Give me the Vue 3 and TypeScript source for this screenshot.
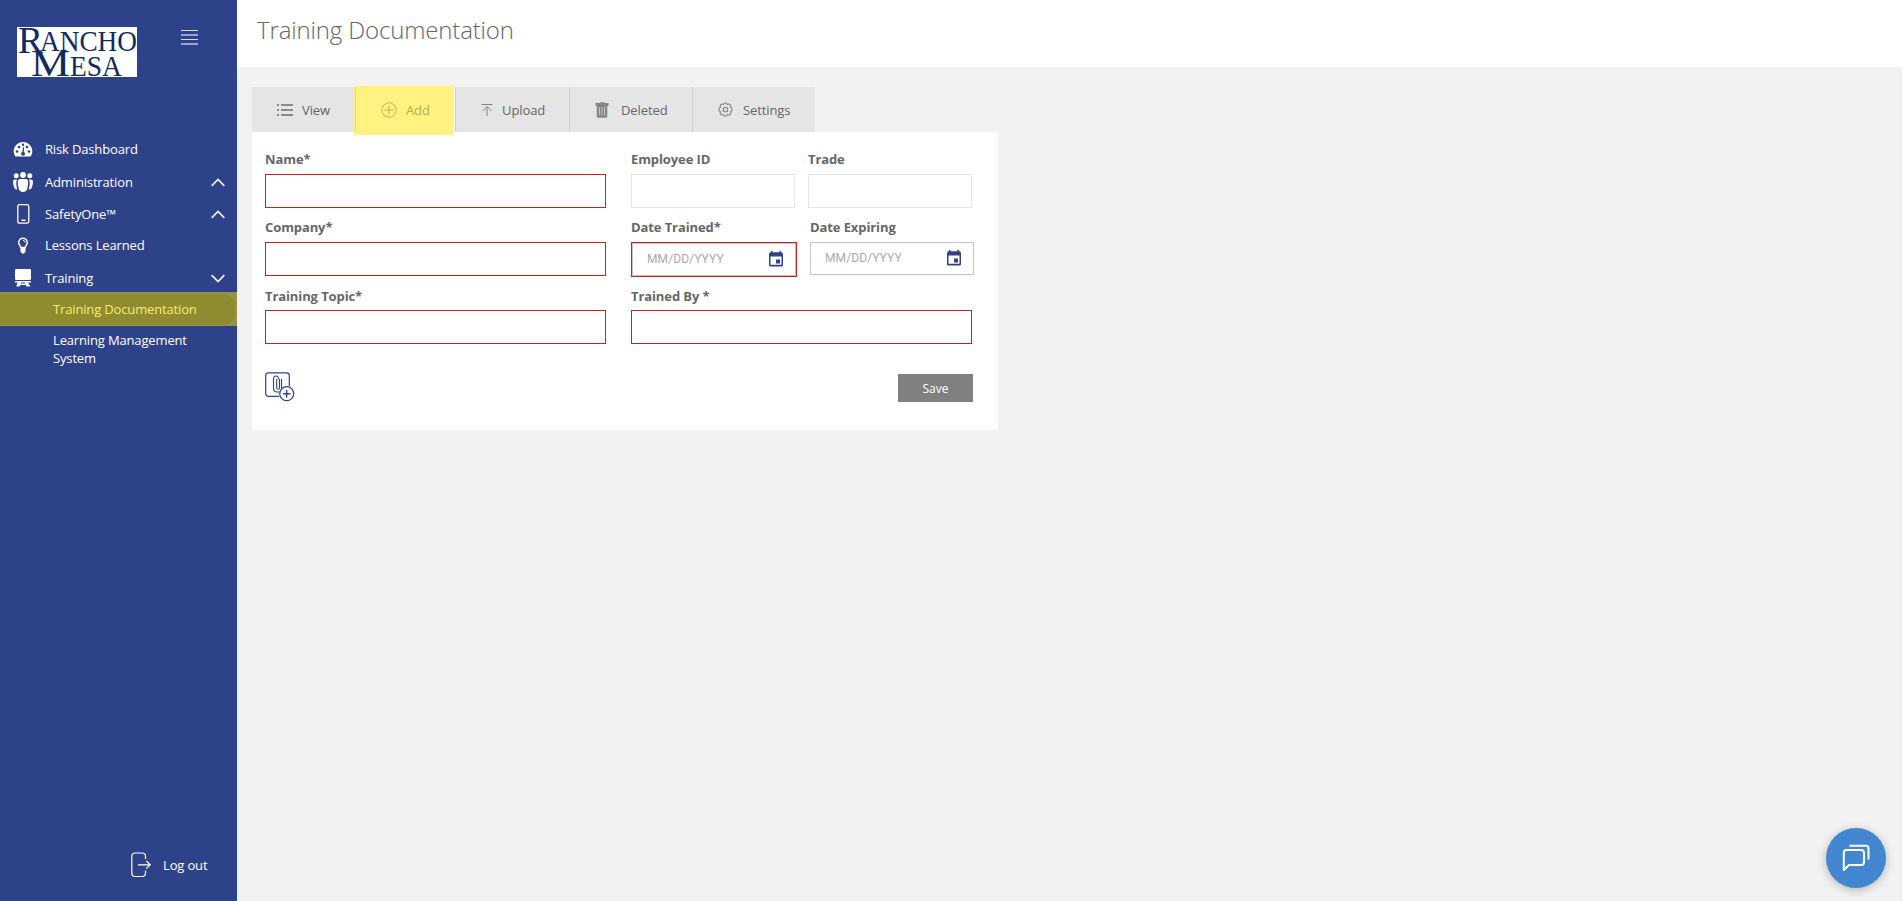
<script setup lang="ts">
import { ref } from 'vue'

interface MenuItem {
  label: string
  icon: string
  height: number
  arrow?: 'up' | 'down'
}

const menu: MenuItem[] = [
  { label: 'Risk Dashboard', icon: 'gauge', height: 34 },
  { label: 'Administration', icon: 'people', height: 32, arrow: 'up' },
  { label: 'SafetyOne™', icon: 'phone', height: 32, arrow: 'up' },
  { label: 'Lessons Learned', icon: 'bulb', height: 30 },
  { label: 'Training', icon: 'board', height: 32, arrow: 'down' },
]

const tabs = [
  { label: 'View', icon: 'list', cls: 'view' },
  { label: 'Add', icon: 'plus', cls: 'add' },
  { label: 'Upload', icon: 'upload', cls: 'upload' },
  { label: 'Deleted', icon: 'trash', cls: 'deleted' },
  { label: 'Settings', icon: 'gear', cls: 'settings' },
]

const name = ref('')
const employeeId = ref('')
const trade = ref('')
const company = ref('')
const dateTrained = ref('')
const dateExpiring = ref('')
const topic = ref('')
const trainedBy = ref('')
</script>

<template>
  <div class="page">
    <aside class="sidebar">
      <div class="brand">
        <svg class="logo" viewBox="0 0 120 50" width="120" height="50">
          <rect width="120" height="50" fill="#fff" />
          <g fill="#0f2b5f" font-family="'Liberation Serif', serif">
            <text x="1" y="26" font-size="38" textLength="25" lengthAdjust="spacingAndGlyphs">R</text>
            <text x="23" y="23.500" font-size="30" textLength="97" lengthAdjust="spacingAndGlyphs">ANCHO</text>
            <text x="14" y="49" font-size="37" textLength="39" lengthAdjust="spacingAndGlyphs">M</text>
            <text x="53" y="49" font-size="29" textLength="52" lengthAdjust="spacingAndGlyphs">ESA</text>
          </g>
        </svg>
        <svg class="burger" viewBox="0 0 17 15" width="17" height="15">
          <rect width="17" height="1" fill="#d9dcea" />
          <rect y="4" width="17" height="2" fill="#9aa3cd" />
          <rect y="9" width="17" height="1" fill="#d9dcea" />
          <rect y="13" width="17" height="2" fill="#9aa3cd" />
        </svg>
      </div>

      <nav class="menu">
        <a v-for="item in menu" :key="item.label" class="item" :class="item.icon" :style="{ height: item.height + 'px' }">
          <span class="item-icon">
            <svg v-if="item.icon === 'gauge'" width="20" height="16" viewBox="0 0 20 16">
              <path d="M2.300 15.500A9.300 9.300 0 1 1 17.700 15.500Z" fill="#fff" />
              <g fill="#2e4289">
                <circle cx="4" cy="10.500" r="1.300" /><circle cx="6" cy="6" r="1.300" /><circle cx="10" cy="3.700" r="1.200" />
                <circle cx="14" cy="6" r="1.300" /><circle cx="16" cy="10.500" r="1.300" />
                <path d="M10.200 6l.9.2-.3 4.700a2 2 0 1 1-1.500 0z" />
              </g>
            </svg>
            <svg v-else-if="item.icon === 'people'" width="20" height="20" viewBox="0 0 20 20" fill="#fff">
              <circle cx="3.200" cy="3.800" r="2.500" /><circle cx="16.800" cy="3.800" r="2.500" /><circle cx="10" cy="3" r="2.900" />
              <path d="M0 9.500q0-2 2-2h2Q3.200 9 3.400 12.500T4.500 17.500q-3 .3-3.500-2.500Q0 12 0 9.500zM20 9.500q0-2-2-2h-2q.8 1.500.6 5T15.500 17.500q3 .3 3.500-2.500 1-3 1-5.500z" />
              <path d="M4.800 9.500q0-2.500 2.500-2.500h5.400q2.500 0 2.500 2.500 0 4-1 7.500-1 3-4.200 3t-4.200-3q-1-3.500-1-7.500z" />
            </svg>
            <svg v-else-if="item.icon === 'phone'" width="13" height="20" viewBox="0 0 13 20" fill="none" stroke="#fff">
              <rect x=".8" y=".7" width="11" height="18.500" rx="1.800" stroke-width="1.300" /><path d="M4.500 16.300h4" stroke-width="1.500" />
            </svg>
            <svg v-else-if="item.icon === 'bulb'" width="12" height="17" viewBox="0 0 12 17">
              <path d="M6 1.200a4.300 4.300 0 0 0-4.300 4.300c0 2 1.700 3 2 5h4.600c.3-2 2-3 2-5A4.300 4.300 0 0 0 6 1.200z" fill="none" stroke="#fff" stroke-width="1.500" />
              <path d="M3.500 10.300h5v4l-1.400 2.200H4.900L3.500 14.300z" fill="#fff" />
              <path d="M6 3.300q2 .2 2.200 2.200" fill="none" stroke="#fff" />
            </svg>
            <svg v-else width="16" height="18" viewBox="0 0 16 18" fill="#fff">
              <rect width="16" height="11" rx="1.300" /><rect y="12" width="16" height="1.500" />
              <path d="M3 13h3l-.5 1.500h5L10 13h3l1.700 3.500H15V17.500h-3.500l-.7-1.500H5.200l-.7 1.500H1.500v-1z" />
            </svg>
          </span>
          <span class="item-label">{{ item.label }}</span>
          <svg v-if="item.arrow" class="chevron" width="14" height="9" viewBox="0 0 14 9" fill="none" stroke="#f1f3fa" stroke-width="1.700">
            <path :d="item.arrow === 'up' ? 'M.7 7.800L7 1.500l6.300 6.300' : 'M.7 1.200L7 7.500l6.300-6.300'" />
          </svg>
        </a>
        <a class="sub current"><span>Training Documentation</span></a>
        <a class="sub wrap">Learning Management System</a>
      </nav>

      <a class="logout">
        <svg width="21" height="26" viewBox="0 0 21 26" fill="none" stroke="#fff" stroke-width="1.200">
          <path d="M14.500 7V4.500Q14.500 1 11 1H4Q.8 1 .8 4.500v16Q.8 24.500 4 24.500h7q3.500 0 3.500-3.500v-2.500M7 12.800h12M15.300 9l3.900 3.800-3.900 3.800" />
        </svg>
        <span>Log out</span>
      </a>
    </aside>

    <main class="main">
      <header class="header"><h1>Training Documentation</h1></header>

      <div class="tabs">
        <button v-for="tab in tabs" :key="tab.label" class="tab" :class="tab.cls">
          <svg v-if="tab.icon === 'list'" width="16" height="12" viewBox="0 0 16 12" fill="#8a8a8a">
            <path d="M0 0h2v2H0zM4 0h12v2H4zM0 5h2v2H0zM4 5h12v2H4zM0 10h2v2H0zM4 10h12v2H4z" />
          </svg>
          <svg v-else-if="tab.icon === 'plus'" width="16" height="16" viewBox="0 0 16 16" fill="none" stroke="#c0b44c">
            <circle cx="8" cy="8" r="7.200" /><path d="M8 3.500v9M3.500 8h9" />
          </svg>
          <svg v-else-if="tab.icon === 'upload'" width="12" height="12" viewBox="0 0 12 12" fill="none" stroke="#858585">
            <path d="M.5.500h11M6 12V3M1.500 7L6 2.500 10.500 7" />
          </svg>
          <svg v-else-if="tab.icon === 'trash'" width="14" height="16" viewBox="0 0 14 16" fill="#858585">
            <path d="M4.500 1V.300h5V1H13.500v2.500L12.300 4v10q0 1.700-1.700 1.700H3.400Q1.700 15.700 1.700 14V4L.5 3.500V1z" />
            <path d="M4.500 5v8.500M7 5v8.500M9.500 5v8.500" stroke="#c9c9c9" stroke-width=".9" />
          </svg>
          <svg v-else width="15" height="15" viewBox="0 0 15 15" fill="none" stroke="#858585" stroke-width="1.100">
            <path d="M5.600 2.400Q6 .8 7.500.8t1.900 1.600q1.500-.8 2.700.1 1.300 1.200.4 2.700 1.800.6 1.700 2.300 0 1.700-1.700 2.300.9 1.500-.4 2.700-1.200.9-2.700.1-.4 1.600-1.900 1.600t-1.900-1.600q-1.500.8-2.700-.1-1.300-1.200-.4-2.700Q.8 9.200.8 7.500q0-1.700 1.700-2.300-.9-1.500.4-2.700 1.200-.9 2.700-.1z" />
            <circle cx="7.500" cy="7.500" r="2.300" />
          </svg>
          <span>{{ tab.label }}</span>
        </button>
      </div>

      <form class="card" @submit.prevent>
        <div class="row">
          <label class="field wide"><span>Name*</span><input v-model="name" class="required" /></label>
          <label class="field half"><span>Employee ID</span><input v-model="employeeId" /></label>
          <label class="field half"><span>Trade</span><input v-model="trade" /></label>
        </div>
        <div class="row">
          <label class="field wide"><span>Company*</span><input v-model="company" class="required" /></label>
          <label class="field date-req"><span>Date Trained*</span>
            <div class="ring"><div class="date">
              <input v-model="dateTrained" placeholder="MM/DD/YYYY" />
              <svg width="14" height="16" viewBox="0 0 14 16"><path d="M2 0h1.500v1.300h7V0H12v1.300q2 0 2 2V14q0 1.500-1.500 1.500h-11Q0 15.500 0 14V3.300q0-2 2-2zM1.500 5.500v8.300h11V5.500zM7 8.500h4v4H7z" fill="#2e4289" fill-rule="evenodd" /></svg>
            </div></div>
          </label>
          <label class="field half"><span>Date Expiring</span>
            <div class="date">
              <input v-model="dateExpiring" placeholder="MM/DD/YYYY" />
              <svg width="14" height="16" viewBox="0 0 14 16"><path d="M2 0h1.500v1.300h7V0H12v1.300q2 0 2 2V14q0 1.500-1.500 1.500h-11Q0 15.500 0 14V3.300q0-2 2-2zM1.500 5.500v8.300h11V5.500zM7 8.500h4v4H7z" fill="#2e4289" fill-rule="evenodd" /></svg>
            </div>
          </label>
        </div>
        <div class="row last">
          <label class="field wide"><span>Training Topic*</span><input v-model="topic" class="required" /></label>
          <label class="field wide"><span>Trained By *</span><input v-model="trainedBy" class="required" /></label>
        </div>
        <div class="actions">
          <svg width="30" height="30" viewBox="0 0 30 30" fill="none" stroke="#2e4289" stroke-width="1.200">
            <path d="M14 24.300H3.500Q.7 24.300.7 21.500V3.500Q.7.800 3.500.8h18q2.800 0 2.800 2.700V14" />
            <path d="M14.500 7v8.500q0 1.800-1.400 1.800t-1.400-1.800V7M8.500 16V7.500Q8.500 4 11 4t2.700 3.500M16.500 7v9M8.500 15.500q0 4.500 3.500 4.500h2" stroke-width="1.100" />
            <circle cx="21.700" cy="21.700" r="7" fill="#fff" /><path d="M21.700 18v7.500M18 21.700h7.500" stroke-width="1.400" />
          </svg>
          <button class="save">Save</button>
        </div>
      </form>
    </main>

    <button class="chat" aria-label="Chat">
      <svg width="28" height="28" viewBox="0 0 28 28" fill="none" stroke="#fff" stroke-width="2" stroke-linejoin="round">
        <path d="M4.500 6H19q3 0 3 3v9q0 3-3 3H7l-5.200 5V9q0-3 2.700-3z" /><path d="M7.500 1.800H24q2.500 0 2.500 2.500V15.500" />
      </svg>
    </button>
  </div>
</template>

<style>
html,
body {
  margin: 0;
  overflow: hidden;
}
</style>

<style scoped>
.page {
  display: flex;
  width: 100vw;
  height: 100vh;
  background: #f2f2f2;
  font-family: 'Open Sans', 'Noto Sans', sans-serif;
  font-size: 13px;
  letter-spacing: -0.15px;
  color: #666;
  box-sizing: border-box;
  border-right: 1px solid #fff;
}
.page * {
  box-sizing: border-box;
}
.sidebar {
  display: flex;
  flex-direction: column;
  width: 237px;
  height: 100%;
  background: #2e4289;
  color: #fff;
}
.brand {
  display: flex;
  align-items: flex-start;
  height: 132px;
  padding: 27px 0 0 17px;
}
.logo {
  overflow: visible;
  letter-spacing: 0;
}
.burger {
  margin: 3px 0 0 44px;
}
.item {
  display: flex;
  align-items: center;
  padding-right: 12px;
}
.board {
  padding-top: 4px;
}
.item-icon {
  display: flex;
  justify-content: center;
  width: 46px;
  margin-right: -1px;
}
.item-label {
  flex: 1;
}
.sub {
  display: flex;
  align-items: center;
}
.current {
  height: 34px;
  padding: 2px 2px 1px 0;
  background: #979545;
  color: #f5ed6b;
}
.current span {
  flex: 1;
  height: 31px;
  padding-left: 53px;
  border-radius: 0 12px 12px 0;
  background: #8f8b30;
  line-height: 31px;
}
.wrap {
  width: 210px;
  padding: 5px 0 0 53px;
  line-height: 18px;
}
.logout {
  display: flex;
  align-items: center;
  gap: 11px;
  margin: auto 0 23px 131px;
}
.main {
  flex: 1;
}
.header {
  height: 67px;
  padding: 13px 0 0 20px;
  background: #fff;
}
h1 {
  margin: 0;
  font-size: 24px;
  font-weight: 300;
  line-height: 34px;
}
.tabs {
  display: flex;
  width: 563px;
  height: 45px;
  margin: 20px 0 0 15px;
}
.tab {
  position: relative;
  display: flex;
  align-items: center;
  padding: 0 0 0 25px;
  border: 0;
  border-left: 1px solid #cfcfcf;
  background: #e5e5e5;
  color: #666;
  font: inherit;
  letter-spacing: -0.1px;
}
.view {
  width: 103px;
  border-left: 0;
  gap: 9px;
}
.add {
  isolation: isolate;
  width: 100px;
  gap: 9px;
  color: #b8ad45;
}
.add::after {
  content: '';
  position: absolute;
  z-index: -1;
  inset: -1px 1px -3px -2px;
  background: linear-gradient(#e8dc6c, #e8dc6c) 1px 1px / 1px 45px no-repeat #fff280;
  box-shadow: 1px 0 #fff;
}
.upload {
  width: 114px;
  gap: 9px;
}
.deleted {
  width: 123px;
  gap: 12px;
}
.settings {
  width: 123px;
  gap: 10px;
}
.card {
  width: 746px;
  height: 298px;
  margin: 0 0 0 15px;
  padding: 17px 0 0 13px;
  background: #fff;
}
.row {
  display: flex;
  gap: 13px;
  height: 68px;
}
.field > span {
  display: block;
  height: 25px;
  line-height: 21px;
  font-weight: 700;
  letter-spacing: -0.1px;
}
.last .field > span {
  line-height: 23px;
}
.field input {
  display: block;
  width: 100%;
  height: 34px;
  border: 1px solid #e5e5e5;
  background: #fff;
  font: inherit;
}
.field input.required {
  border-color: #c4221a;
}
.wide {
  width: 341px;
  margin-right: 12px;
}
.half {
  width: 164px;
}
.date-req {
  width: 166px;
}
.ring {
  border: 1px solid #c4221a;
}
.date {
  display: flex;
  align-items: center;
  height: 33px;
  padding: 0 12px 2px 14px;
  border: 1px solid #c4c4c4;
}
.date input {
  flex: 1;
  min-width: 0;
  height: 28px;
  padding: 0;
  border: 0;
  font-family: Roboto, sans-serif;
  font-size: 12px;
  letter-spacing: 0.1px;
}
.date input::placeholder {
  color: #aaa;
}
.actions {
  display: flex;
  justify-content: space-between;
  padding: 19px 25px 0 0;
}
.save {
  width: 75px;
  height: 28px;
  margin-top: 2px;
  border: 0;
  background: #808080;
  color: #fff;
  font: 12px 'Open Sans', sans-serif;
}
.chat {
  position: absolute;
  right: 17px;
  bottom: 13px;
  display: flex;
  align-items: center;
  justify-content: center;
  width: 60px;
  height: 60px;
  padding: 0;
  border: 0;
  border-radius: 50%;
  background: #4287d0;
  box-shadow: 0 2px 10px rgba(0, 0, 0, 0.25);
}
</style>
